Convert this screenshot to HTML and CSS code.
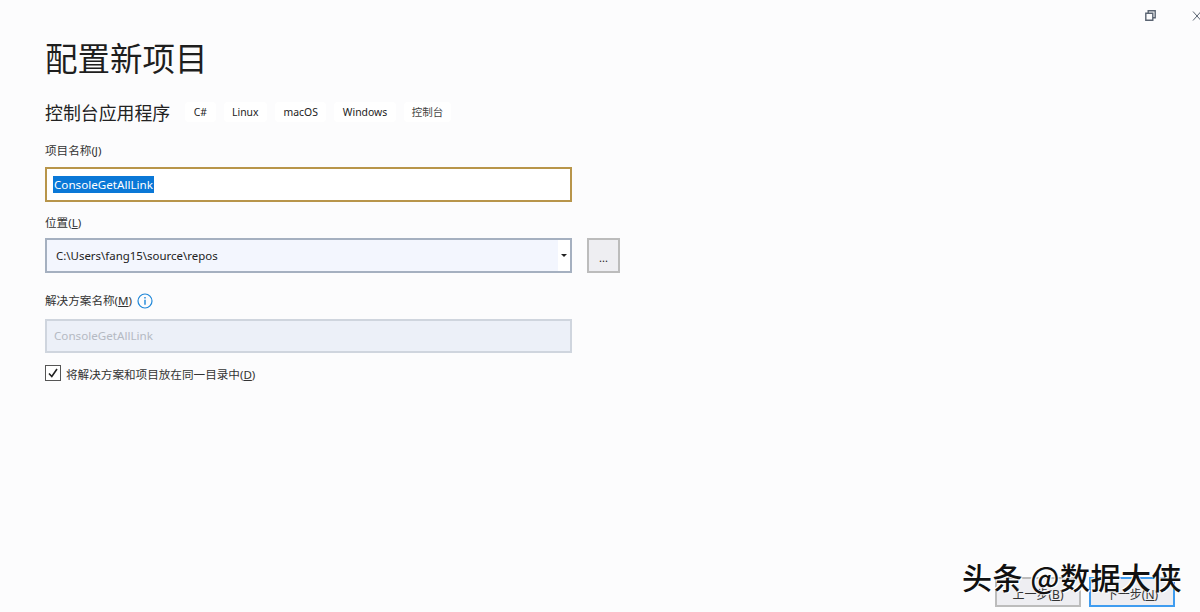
FILE: index.html
```html
<!DOCTYPE html>
<html lang="zh-CN">
<head>
<meta charset="utf-8">
<title>配置新项目</title>
<link rel="stylesheet" href="styles.css">
</head>
<body>
<div class="window">
  <header class="chrome">
    <svg class="restore" width="11" height="11" viewBox="0 0 11 11" aria-hidden="true"><path d="M.8 3.2h7v7h-7z M3.2 3.2v-2.4h7v7h-2.4" fill="none" stroke="#5a6472" stroke-width="1.4"/></svg>
    <svg class="close" width="9" height="10" viewBox="0 0 9 10" aria-hidden="true"><path d="M1 .5l8 9M9 .5l-8 9" fill="none" stroke="#5a6472" stroke-width="1"/></svg>
  </header>
  <main class="content">
    <h1 class="title">配置新项目</h1>
    <div class="subtitle-row">
      <h2 class="subtitle">控制台应用程序</h2>
      <ul class="tags">
        <li class="tag">C#</li>
        <li class="tag">Linux</li>
        <li class="tag">macOS</li>
        <li class="tag">Windows</li>
        <li class="tag tag-muted">控制台</li>
      </ul>
    </div>

    <div class="label label-name">项目名称(<u>J</u>)</div>
    <div class="field field-focus"><span class="selected">ConsoleGetAllLink</span></div>

    <div class="label label-location">位置(<u>L</u>)</div>
    <div class="location-row">
      <div class="combo">
        <span class="combo-text">C:\Users\fang15\source\repos</span>
        <span class="combo-arrow"></span>
      </div>
      <div class="browse"><span>...</span></div>
    </div>

    <div class="label label-solution">
      <span>解决方案名称(<u>M</u>)</span>
      <svg class="info" width="16" height="16" viewBox="0 0 16 16" aria-hidden="true"><circle cx="8" cy="8" r="7" fill="none" stroke="#1f87d8" stroke-width="1.2"/><path d="M8 6.8v5M8 4v1.4" stroke="#1f87d8" stroke-width="1.4" fill="none"/></svg>
    </div>
    <div class="field field-disabled">ConsoleGetAllLink</div>

    <div class="check-row">
      <span class="checkbox"><svg width="14" height="14" viewBox="0 0 14 14" aria-hidden="true"><path d="M3 7.5l2.8 3L11 3" fill="none" stroke="#222" stroke-width="1.6"/></svg></span>
      <span class="check-label">将解决方案和项目放在同一目录中(<u>D</u>)</span>
    </div>
  </main>
  <footer class="actions">
    <div class="btn">上一步(<u>B</u>)</div>
    <div class="btn btn-primary">下一步(<u>N</u>)</div>
  </footer>
  <div class="watermark">头条 @数据大侠</div>
</div>
</body>
</html>
```
FILE: styles.css
```css
* { box-sizing: border-box; }
html, body { margin: 0; padding: 0; }
body {
  width: 1200px;
  height: 612px;
  overflow: hidden;
  background: #fcfcfd;
  color: #222;
  font-family: "Noto Sans", "Noto Sans CJK SC", sans-serif;
}
.window {
  position: relative;
  width: 1200px;
  height: 612px;
  display: flex;
  flex-direction: column;
  overflow: hidden;
}
.chrome {
  height: 30px;
  flex: none;
  display: flex;
  justify-content: flex-end;
  align-items: flex-start;
  gap: 36px;
  padding: 10px 0 0 0;
}
.close { margin-right: -1px; margin-top: 1px; }
.content {
  flex: 1;
  padding: 0 0 0 45px;
}
.title {
  margin: 6px 0 0;
  font: 400 32.5px/42px "Noto Sans CJK SC", sans-serif;
  color: #1e1e1e;
}
.subtitle-row {
  display: flex;
  align-items: center;
  margin-top: 22px;
  height: 24px;
}
.subtitle {
  margin: 0;
  font: 400 17.9px/24px "Noto Sans CJK SC", sans-serif;
  color: #222;
}
.tags {
  display: flex;
  gap: 8px;
  margin: 0 0 0 15px;
  padding: 0;
  list-style: none;
}
.tag {
  height: 20px;
  padding: 0 8.5px;
  border-radius: 4px;
  background: #fff;
  font-size: 10.4px;
  line-height: 20px;
  color: #222;
}
.tag-muted { font-size: 10.5px; color: #444; padding: 0 8px; }
.label {
  font-size: 11.6px;
  line-height: 16px;
  color: #333;
}
.label-name { margin-top: 19px; }
.label-location { margin-top: 13px; }
.label-solution {
  margin-top: 20px;
  display: flex;
  align-items: center;
  height: 16px;
}
.info { margin-left: 5px; }
.field {
  width: 527px;
  height: 35px;
  margin-top: 8px;
  font-size: 11.65px;
  line-height: 17px;
}
.field-focus {
  border: 2px solid #b8954a;
  background: #fff;
  padding: 7px 6px;
}
.selected {
  display: inline-block;
  padding: 0 1px;
  height: 17px;
  background: #0a78d7;
  color: #fff;
}
.field-disabled {
  height: 34px;
  margin-top: 10px;
  border: 2px solid #cfd5de;
  background: #ecf0f8;
  color: #b5bac3;
  padding: 6px 7px;
}
.location-row {
  display: flex;
  gap: 15px;
  margin-top: 7px;
}
.combo {
  width: 527px;
  height: 35px;
  border: 2px solid #a5b0c0;
  background: #fff;
  display: flex;
  align-items: stretch;
}
.combo-text {
  flex: 1;
  background: #f3f6fe;
  padding: 0 9px;
  font-size: 11.45px;
  line-height: 31px;
  color: #222;
}
.combo-arrow {
  width: 12px;
  position: relative;
}
.combo-arrow::after {
  content: "";
  position: absolute;
  left: 3px;
  top: 14px;
  border-style: solid;
  border-width: 3px 3px 0;
  border-color: #222 transparent transparent;
}
.browse {
  width: 33px;
  height: 35px;
  border: 2px solid #bcbcbc;
  background: #eeeef2;
  font-size: 11px;
  color: #222;
  text-align: center;
  line-height: 35px;
}
.check-row {
  display: flex;
  align-items: center;
  gap: 5px;
  margin-top: 12px;
  height: 16px;
}
.checkbox {
  width: 16px;
  height: 16px;
  border: 1px solid #555;
  background: #fff;
  display: flex;
  align-items: center;
  justify-content: center;
}
.check-label { font-size: 11.6px; line-height: 18px; padding-top: 3px; color: #333; }
.actions {
  flex: none;
  display: flex;
  justify-content: flex-end;
  gap: 8px;
  padding: 0 25px 5px 0;
}
.btn {
  width: 86px;
  height: 30px;
  border: 2px solid #bcbcbc;
  background: #eeeef2;
  font-size: 12px;
  line-height: 31px;
  text-align: center;
  color: #333;
}
.btn-primary { border-color: #3f9cf0; }
.watermark {
  position: absolute;
  left: 962px;
  top: 554px;
  font: 500 30px/44px "Noto Sans CJK SC", sans-serif;
  letter-spacing: 0.5px;
  color: #111;
  white-space: nowrap;
  text-shadow: 1px 1px 0 #fff, -1px -1px 0 #fff;
}
```
